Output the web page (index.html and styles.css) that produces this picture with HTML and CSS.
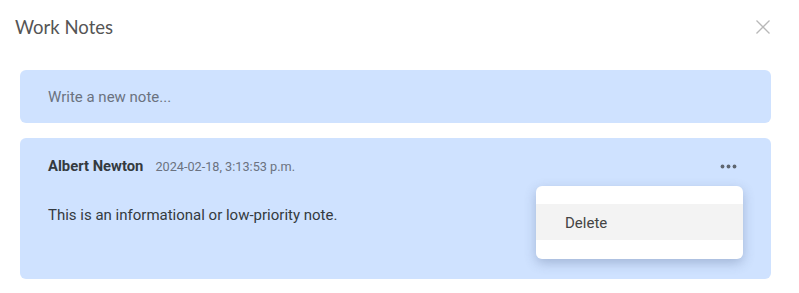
FILE: index.html
```html
<!DOCTYPE html>
<html lang="en">
<head>
  <meta charset="UTF-8">
  <title>Work Notes</title>
  <link rel="stylesheet" href="styles.css">
</head>
<body>
  <div class="modal">
    <header class="modal-header">
      <h2>Work Notes</h2>
      <button class="close" aria-label="Close">
        <svg width="16" height="16" viewBox="0 0 16 16"><path d="M1.5 1.5 L14.5 14.5 M14.5 1.5 L1.5 14.5" stroke="#b8b8b8" stroke-width="1.3" fill="none"/></svg>
      </button>
    </header>

    <div class="new-note">Write a new note...</div>

    <div class="note">
      <div class="note-head">
        <span class="author">Albert Newton</span>
        <span class="date">2024-02-18, 3:13:53 p.m.</span>
        <svg class="dots" width="17" height="5" viewBox="0 0 17 5"><circle cx="2.5" cy="2.5" r="1.9" fill="#5f6670"/><circle cx="8.5" cy="2.5" r="1.9" fill="#5f6670"/><circle cx="14.5" cy="2.5" r="1.9" fill="#5f6670"/></svg>
      </div>
      <p class="note-text">This is an informational or low-priority note.</p>

      <div class="menu">
        <div class="menu-item">Delete</div>
      </div>
    </div>
  </div>
</body>
</html>
```

FILE: styles.css
```css
body {
  margin: 0;
  background: #fff;
  font-family: Roboto, "Liberation Sans", sans-serif;
  color: #333;
}
.modal {
  padding: 0 28px 0 20px;
}
.modal-header {
  display: flex;
  justify-content: space-between;
  align-items: center;
  height: 54px;
  margin-left: -5px;
}
.modal-header h2 {
  margin: 0;
  font-family: Lato, "Open Sans", sans-serif;
  font-weight: 400;
  font-size: 18.5px;
  color: #555;
}
.close {
  border: none;
  background: none;
  padding: 0;
  width: 16px;
  height: 16px;
  cursor: pointer;
}
.new-note {
  margin-top: 16px;
  height: 53px;
  display: flex;
  align-items: center;
  padding-left: 28px;
  background: #cfe2ff;
  border-radius: 6px;
  font-size: 15px;
  color: #6b7280;
}
.note {
  position: relative;
  margin-top: 15px;
  height: 141px;
  background: #cfe2ff;
  border-radius: 6px;
  padding: 0 34px 0 28px;
  box-sizing: border-box;
}
.note-head {
  display: flex;
  align-items: center;
  padding-top: 19px;
  height: 18px;
}
.author {
  font-weight: 700;
  font-size: 14.8px;
  color: #343a40;
}
.date {
  margin-left: 12px;
  font-size: 12.7px;
  color: #6b7280;
}
.dots {
  margin-left: auto;
}
.note-text {
  margin: 31px 0 0;
  font-size: 15px;
  color: #343a40;
}
.menu {
  position: absolute;
  top: 48px;
  right: 28px;
  width: 207px;
  padding: 18px 0 19px;
  background: #fff;
  border-radius: 6px;
  box-shadow: 0 4px 12px rgba(60, 80, 120, 0.3);
}
.menu-item {
  height: 36px;
  display: flex;
  align-items: center;
  padding: 2px 0 0 29px;
  box-sizing: border-box;
  background: #f3f3f3;
  font-size: 15px;
  color: #444;
}
```
